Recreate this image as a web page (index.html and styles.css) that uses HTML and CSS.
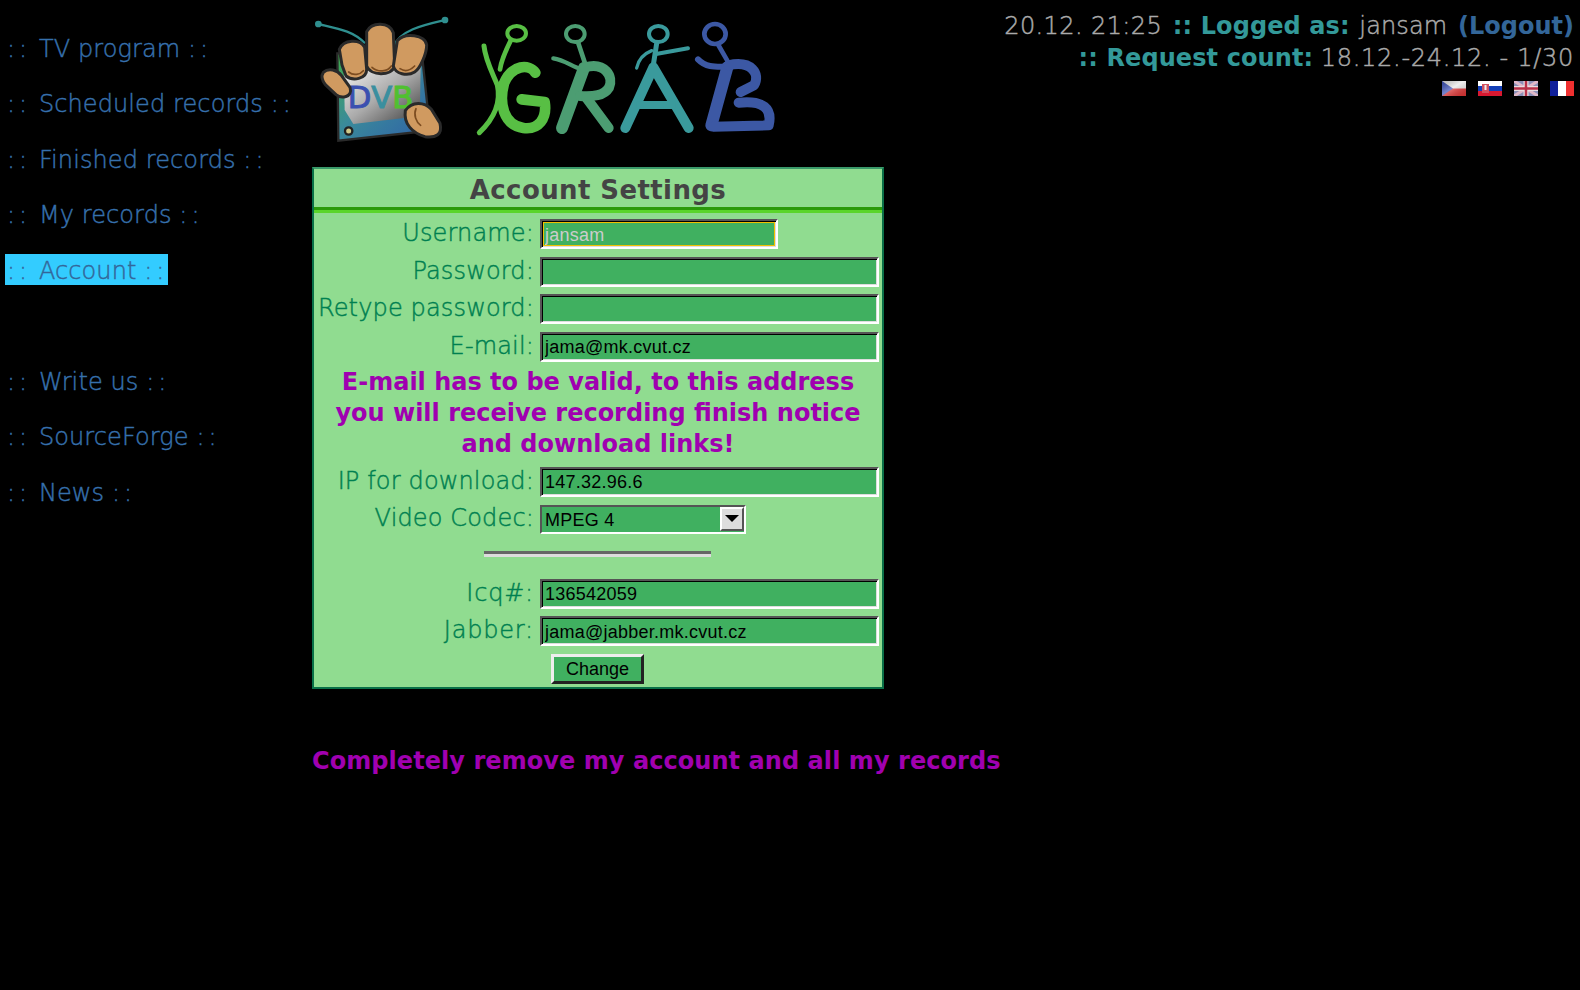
FILE: index.html
```html
<!DOCTYPE html>
<html lang="en">
<head>
<meta charset="utf-8">
<title>DVB Grab - Account</title>
<link rel="stylesheet" href="styles.css">
</head>
<body>
<div class="page">
  <nav class="side">
    <a class="nav-item" href="#"><span class="dots">::</span> TV program <span class="dots">::</span></a>
    <a class="nav-item" href="#"><span class="dots">::</span> Scheduled records <span class="dots">::</span></a>
    <a class="nav-item" href="#"><span class="dots">::</span> Finished records <span class="dots">::</span></a>
    <a class="nav-item" href="#"><span class="dots">::</span> My records <span class="dots">::</span></a>
    <a class="nav-item active" href="#"><span class="dots">::</span> Account <span class="dots">::</span></a>
    <div class="nav-gap"></div>
    <a class="nav-item" href="#"><span class="dots">::</span> Write us <span class="dots">::</span></a>
    <a class="nav-item" href="#"><span class="dots">::</span> SourceForge <span class="dots">::</span></a>
    <a class="nav-item" href="#"><span class="dots">::</span> News <span class="dots">::</span></a>
  </nav>
  <main class="main">
    <svg class="logo" width="470" height="135" viewBox="0 0 470 135" aria-label="DVB Grab">
      <defs>
        <linearGradient id="tv" x1="0" y1="0" x2="1" y2="1"><stop offset="0" stop-color="#3fae4a"/><stop offset=".45" stop-color="#3a8a9a"/><stop offset="1" stop-color="#2f5fa8"/></linearGradient>
        <linearGradient id="scr" x1="0" y1="0" x2="1" y2="1"><stop offset="0" stop-color="#f4f4f4"/><stop offset=".5" stop-color="#aaa"/><stop offset="1" stop-color="#3c3c3c"/></linearGradient>
      </defs>
      <g transform="translate(-2,-5) scale(.33333)">
        <g fill="none" stroke="#2f8f8f" stroke-width="7">
          <path d="M25 42 C80 55 130 62 165 100"/><path d="M405 30 C340 45 270 60 250 110"/>
        </g>
        <circle cx="25" cy="42" r="10" fill="#2f8f8f"/><circle cx="405" cy="30" r="10" fill="#2f8f8f"/>
        <path d="M82 130 L335 125 L360 362 L85 392 Z" fill="url(#tv)" stroke="#2a2a2a" stroke-width="7"/>
        <path d="M102 185 L332 170 L330 285 L302 322 L130 342 L104 300 Z" fill="url(#scr)"/>
        <circle cx="116" cy="363" r="11" fill="#cfc98a" stroke="#222" stroke-width="7"/>
        <text class="dvb" x="113" y="293"><tspan fill="#3a50b0" stroke="#3a50b0">D</tspan><tspan fill="#3a8f9f" stroke="#3a8f9f">V</tspan><tspan fill="#50c030" stroke="#50c030">B</tspan></text>
        <g fill="#d09a60" stroke="#2a2a2a" stroke-width="9" stroke-linejoin="round">
          <path d="M88 118 C100 88 150 85 164 112 L170 178 C170 208 128 214 108 198 L96 165 Z"/>
          <path d="M170 65 C186 34 238 36 250 68 L254 168 C244 200 182 198 170 168 Z"/>
          <path d="M262 92 C284 66 346 74 350 105 C350 132 330 176 314 186 C292 200 256 192 250 168 Z"/>
          <path d="M40 187 C56 172 82 180 94 196 L120 232 C130 264 92 266 78 254 L46 224 C34 208 34 196 40 187 Z"/>
          <path d="M286 302 C306 272 344 276 364 298 L390 340 C398 374 378 384 345 380 C308 370 280 342 286 302 Z"/>
        </g>
        <g fill="none" stroke="#7c4c20" stroke-width="5" stroke-linecap="round">
          <path d="M116 186 C130 198 150 194 160 182"/><path d="M186 172 C204 188 232 186 244 168"/><path d="M270 176 C288 188 304 178 314 168"/><path d="M318 296 C310 314 318 336 332 346"/>
        </g>
      </g>
      <g transform="translate(158,-5) scale(.33333)" fill="none" stroke-linecap="round" stroke-linejoin="round">
        <g stroke="#58bf44">
          <ellipse cx="140" cy="70" rx="28" ry="22" stroke-width="12"/>
          <path d="M122 92 C108 120 94 150 90 178" stroke-width="14"/>
          <path d="M42 108 C46 150 68 190 82 225 C92 270 78 320 28 368" stroke-width="15"/>
          <path d="M196 188 C178 162 126 162 102 220 C86 280 100 345 160 354 C206 360 232 326 224 276 L155 268" stroke-width="32"/>
        </g>
        <g stroke="#4c9d72">
          <ellipse cx="316" cy="72" rx="28" ry="24" stroke-width="12"/>
          <path d="M325 100 L345 160" stroke-width="14"/>
          <path d="M250 145 C285 150 305 170 335 178" stroke-width="13"/>
          <path d="M342 174 L276 354" stroke-width="36"/>
          <path d="M345 172 C405 155 432 200 417 233 C402 258 370 260 330 258" stroke-width="30"/>
          <path d="M350 265 L416 354" stroke-width="30"/>
        </g>
        <g stroke="#3a9a9c">
          <ellipse cx="565" cy="72" rx="28" ry="24" stroke-width="12"/>
          <path d="M560 100 L550 165" stroke-width="15"/>
          <path d="M558 132 L654 115" stroke-width="12"/>
          <path d="M545 122 C520 132 505 150 500 174" stroke-width="10"/>
          <path d="M550 172 L466 354 M550 172 L656 354" stroke-width="30"/>
          <path d="M510 285 L606 285" stroke-width="24"/>
        </g>
        <g stroke="#3c58a4">
          <ellipse cx="735" cy="72" rx="32" ry="30" stroke-width="14"/>
          <path d="M745 105 L772 152" stroke-width="14"/>
          <path d="M684 148 C710 175 740 170 780 170" stroke-width="18"/>
          <path d="M772 172 L724 346" stroke-width="36"/>
          <path d="M775 166 C845 150 872 192 852 226 L812 246" stroke-width="30"/>
          <path d="M806 278 C880 270 908 296 896 346 L730 350" stroke-width="30"/>
        </g>
      </g>
    </svg>
    <form class="panel">
      <h1 class="panel-title">Account Settings</h1>
      <div class="panel-body">
        <div class="row"><label class="lbl">Username:</label><input class="field short" value="jansam"></div>
        <div class="row"><label class="lbl">Password:</label><input class="field" value=""></div>
        <div class="row"><label class="lbl">Retype password:</label><input class="field" value=""></div>
        <div class="row"><label class="lbl">E-mail:</label><input class="field" value="jama@mk.cvut.cz"></div>
        <p class="notice">E-mail has to be valid, to this address<br>you will receive recording finish notice<br>and download links!</p>
        <div class="row"><label class="lbl">IP for download:</label><input class="field" value="147.32.96.6"></div>
        <div class="row"><label class="lbl">Video Codec:</label>
          <div class="select"><span class="select-val">MPEG 4</span><span class="select-btn"><span class="arrow"></span></span></div>
        </div>
        <hr class="divider">
        <div class="row"><label class="lbl lbl-wide">Icq#:</label><input class="field" value="136542059"></div>
        <div class="row"><label class="lbl lbl-wide">Jabber:</label><input class="field" value="jama@jabber.mk.cvut.cz"></div>
        <div class="btn-row"><button class="btn" type="button">Change</button></div>
      </div>
    </form>
    <a class="remove" href="#">Completely remove my account and all my records</a>
  </main>
  <aside class="status">
    <div class="status-line"><span class="spaced">20.12. 21:25</span> <b class="teal gap">:: Logged as:</b> <span class="user">jansam</span> <b class="blue">(Logout)</b></div>
    <div class="status-line"><b class="teal">:: Request count:</b> <span class="spaced-wide">18.12.-24.12. - 1/30</span></div>
    <div class="flags">
      <svg width="24" height="15" viewBox="0 0 24 15"><defs><linearGradient id="cz" x1="0" y1="0" x2="1" y2="1"><stop offset="0" stop-color="#000" stop-opacity=".2"/><stop offset=".45" stop-color="#fff" stop-opacity=".3"/><stop offset="1" stop-color="#000" stop-opacity=".1"/></linearGradient></defs><rect width="24" height="8" fill="#e8e8e8"/><rect y="7.5" width="24" height="7.5" fill="#d33"/><path d="M0 0 L11 7.5 L0 15Z" fill="#3a50b8"/><rect width="24" height="15" fill="url(#cz)"/></svg>
      <svg width="24" height="15" viewBox="0 0 24 15"><rect width="24" height="5" fill="#fff"/><rect y="5" width="24" height="5" fill="#1440b8"/><rect y="10" width="24" height="5" fill="#d81830"/><rect x="4" y="3" width="7" height="9" fill="#d05060"/><rect x="6.5" y="4" width="2" height="5" fill="#eee"/></svg>
      <svg width="24" height="15" viewBox="0 0 24 15"><rect width="24" height="15" fill="#8a90b8"/><path d="M0 0L24 15M24 0L0 15" stroke="#e0b8c8" stroke-width="3"/><path d="M12 0V15M0 7.5H24" stroke="#e8dde0" stroke-width="5"/><path d="M12 0V15M0 7.5H24" stroke="#b83048" stroke-width="2.5"/></svg>
      <svg width="24" height="15" viewBox="0 0 24 15"><rect width="8" height="15" fill="#10209a"/><rect x="8" width="8" height="15" fill="#fff"/><rect x="16" width="8" height="15" fill="#f03030"/></svg>
    </div>
  </aside>
</div>
</body>
</html>
```

FILE: styles.css
```css
html, body { margin: 0; height: 100%; background: #000; }
body { font-family: "DejaVu Sans", sans-serif; font-weight: 200; font-size: 24px; color: #aaa; overflow: hidden; -webkit-text-stroke: .45px currentColor; }
.page { display: flex; align-items: flex-start; height: 990px; box-sizing: border-box; }

.side { width: 312px; flex: none; display: flex; flex-direction: column; align-items: flex-start; padding: 32px 0 0 5px; box-sizing: border-box; }
.nav-item { display: block; height: 31px; line-height: 35px; padding: 0 0 0 2px; margin-bottom: 24.4px; letter-spacing: .1px; color: #3670ad; text-decoration: none; white-space: nowrap; }
.nav-item.active { background: #33ccff; color: #336699; }
.nav-gap { height: 56px; }
.dots { letter-spacing: 4px; }

.main { width: 690px; flex: none; display: flex; flex-direction: column; align-items: flex-start; }
.logo { display: block; margin-top: 15px; height: 135px; margin-bottom: 17px; }
.dvb { font-family: "DejaVu Sans", sans-serif; font-weight: 400; font-size: 92px; stroke-width: 3; }

.panel { width: 572px; height: 522px; box-sizing: border-box; background: #90dc90; border: 2px solid; border-color: #3a9a6a #0a7048 #0a7048 #0a7048; display: flex; flex-direction: column; }
.panel-title { margin: 0; height: 38px; line-height: 42px; text-align: center; font-family: "DejaVu Sans", sans-serif; font-weight: bold; font-size: 26px; letter-spacing: .4px; color: #444; -webkit-text-stroke: 0; border-bottom: 3px solid #2a9a0a; box-sizing: content-box; }
.panel-body { border-top: 3px solid #5ad52a; padding: 6px 3px 0 0; display: flex; flex-direction: column; align-items: stretch; }
.row { display: flex; align-items: center; height: 30px; margin-bottom: 7.5px; }
.lbl { width: 220px; flex: none; margin-right: 6px; padding-bottom: 2px; text-align: right; letter-spacing: .15px; color: #008050; white-space: nowrap; }
.lbl-wide { letter-spacing: .8px; }
.field { flex: 1; min-width: 0; height: 30px; box-sizing: border-box; padding: 2px 1px 0 3px; background: #40b060; border: 2px solid; border-color: #555 #fff #fff #555; box-shadow: inset 1px 1px 0 #000, inset -1px -1px 0 #ddd; font: 18px "Liberation Sans", sans-serif; letter-spacing: .25px; color: #000; outline: none; -webkit-text-stroke: 0; }
.field.short { flex: none; width: 238px; color: #ccc; box-shadow: inset 1px 1px 0 #000, inset -1px -1px 0 #ddd, inset 0 0 0 2px #f0c000; }

.notice { margin: -2px 0 6.5px; text-align: center; font-family: "DejaVu Sans", sans-serif; font-weight: bold; font-size: 24px; line-height: 31px; color: #a000b0; padding-left: 3px; -webkit-text-stroke: 0; }

.select { width: 206px; height: 29px; box-sizing: border-box; display: flex; align-items: stretch; background: #40b060; border: 2px solid; border-color: #555 #fff #fff #555; font: 18px "Liberation Sans", sans-serif; letter-spacing: .25px; color: #000; -webkit-text-stroke: 0; }
.select-val { flex: 1; padding-left: 3px; line-height: 27px; }
.select-btn { width: 24px; margin-bottom: 1px; box-sizing: border-box; background: #ddd; border: 2px solid; border-color: #fff #555 #555 #fff; display: flex; align-items: center; justify-content: center; }
.arrow { width: 0; height: 0; border: 7px solid transparent; border-top: 7px solid #000; border-bottom: 0; }

.divider { width: 227px; height: 0; margin: 9px auto 22px 170px; border: 0; border-top: 3px solid #666; border-bottom: 3px solid #ddd; }
.btn-row { display: flex; padding-left: 237px; }
.btn { width: 93px; height: 30px; box-sizing: border-box; background: #40b060; border: 3px solid; border-color: #eee #222 #222 #eee; font: 18px "Liberation Sans", sans-serif; color: #000; padding: 2px 0 0; -webkit-text-stroke: 0; }

.remove { margin-top: 58px; font-family: "DejaVu Sans", sans-serif; font-weight: bold; font-size: 24px; letter-spacing: .06px; color: #a000b0; text-decoration: none; white-space: nowrap; -webkit-text-stroke: 0; }

.status { flex: 1; min-width: 0; padding: 10px 6px 0 0; text-align: right; white-space: nowrap; }
.status-line { height: 32px; line-height: 32px; }
.spaced { letter-spacing: .4px; }
.spaced-wide { letter-spacing: .7px; }
.gap { margin-left: 3px; }
.user { margin-left: 2px; letter-spacing: .15px; }
.teal { color: #339999; font-family: "DejaVu Sans", sans-serif; font-weight: bold; letter-spacing: .1px; -webkit-text-stroke: 0; }
.blue { color: #336699; font-family: "DejaVu Sans", sans-serif; font-weight: bold; margin-left: 3px; -webkit-text-stroke: 0; }
.flags { display: flex; justify-content: flex-end; gap: 12px; margin-top: 7px; }
.flags svg { display: block; }
```
